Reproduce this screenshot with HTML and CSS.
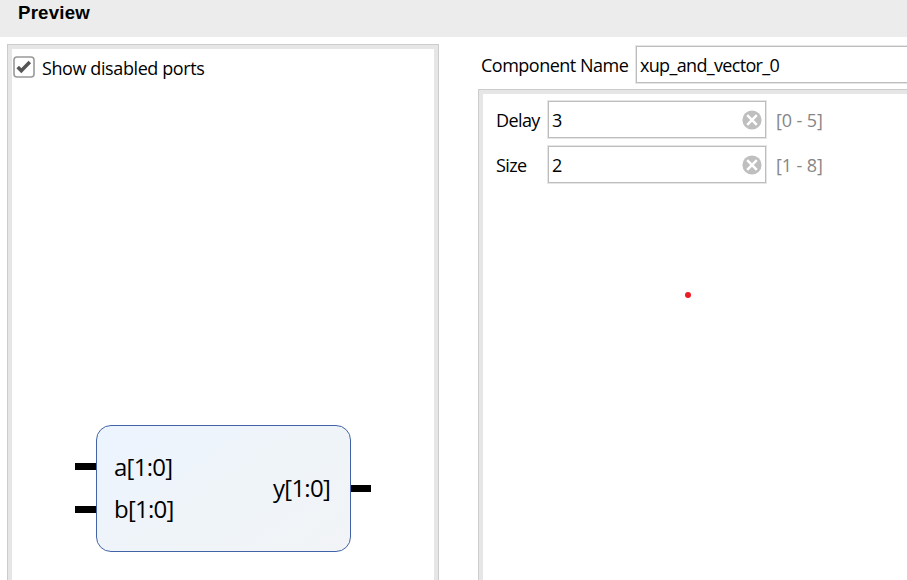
FILE: index.html
```
<!DOCTYPE html>
<html lang="en">
<head>
<meta charset="utf-8">
<title>Preview</title>
<link rel="stylesheet" href="styles.css">
</head>
<body>
<header class="header">Preview</header>
<main class="main">
  <section class="preview">
    <label class="toggle">
      <svg class="check" width="22" height="22" viewBox="0 0 22 22"><rect x="1" y="1" width="20" height="20" rx="3" fill="#fff" stroke="#999" stroke-width="1.6"/><path d="M4.7 11l3.6 3.8L16.8 6" fill="none" stroke="#555" stroke-width="3.5"/></svg>
      <span class="t-show">Show disabled ports</span>
    </label>
    <div class="symbol">
      <div class="pins pins-in"><i></i><i></i></div>
      <div class="block">
        <div class="inputs"><span class="t-a">a[1:0]</span><span class="t-b">b[1:0]</span></div>
        <span class="t-y">y[1:0]</span>
      </div>
      <div class="pins"><i></i></div>
    </div>
  </section>
  <section class="config">
    <div class="name-row"><span class="t-name">Component Name</span><div class="field name-field"><span class="t-value">xup_and_vector_0</span></div></div>
    <div class="params">
      <div class="row"><span class="label t-delay">Delay</span><div class="field"><span>3</span><svg width="20" height="20" viewBox="0 0 20 20"><circle cx="10" cy="10" r="9.6" fill="#bfbfbf"/><path d="M5.2 5.2l9.6 9.6m0-9.6l-9.6 9.6" stroke="#fff" stroke-width="2.5"/></svg></div><span class="range">[0 - 5]</span></div>
      <div class="row"><span class="label t-size">Size</span><div class="field"><span>2</span><svg width="20" height="20" viewBox="0 0 20 20"><circle cx="10" cy="10" r="9.6" fill="#bfbfbf"/><path d="M5.2 5.2l9.6 9.6m0-9.6l-9.6 9.6" stroke="#fff" stroke-width="2.5"/></svg></div><span class="range">[1 - 8]</span></div>
      <div class="dot"></div>
    </div>
  </section>
</main>
</body>
</html>
```
FILE: styles.css
```
* { box-sizing: border-box; }
body { margin: 0; height: 580px; overflow: hidden; background: #fff; color: #000; font: 18px/24px "Open Sans", "Noto Sans", sans-serif; white-space: nowrap; }
.header { height: 37px; padding: 1px 0 0 18px; background: #ececec; font: bold 18.67px/24px "Liberation Sans", sans-serif; letter-spacing: .2px; }
.main { display: flex; height: 543px; }
.preview { width: 432px; margin: 7px 0 0 7px; border: 1px solid #ccc; border-bottom: 0; box-shadow: inset 4px 0 #e6e6e6, inset -4px 0 #e6e6e6, inset 0 4px #e6e6e6; padding: 11px 0 0 5px; }
.toggle { display: flex; height: 24px; }
.check { margin-right: 7px; }
.t-show { letter-spacing: -.4px; }
.symbol { display: flex; margin: 345px 0 0 62px; }
.pins { width: 20px; padding-top: 60px; }
.pins-in { width: 21px; padding-top: 38px; }
.pins i { display: block; height: 7px; background: #000; }
.pins i + i { margin-top: 36px; }
.block { display: flex; justify-content: space-between; width: 255px; height: 127px; padding: 0 20px 0 17px; border: 1px solid #4263a5; border-radius: 15px; background: linear-gradient(145deg, #ecf4ff, #eff4f8 55%, #f2f4f7); font-size: 24px; line-height: 42px; }
.inputs { display: flex; flex-direction: column; padding-top: 20px; }
.t-y { padding-top: 41px; }
.t-a, .t-b, .t-y { letter-spacing: -.75px; }
.config { flex: 1; margin: 8px 0 0 39px; }
.name-row { display: flex; align-items: center; height: 39px; padding-left: 3px; }
.t-name { width: 154px; letter-spacing: -.5px; }
.field { display: flex; align-items: center; justify-content: space-between; width: 220px; height: 39px; padding: 0 4px 0 4px; border: 1px solid #e6e6e6; box-shadow: inset 0 0 0 1px #bdbdbd; }
.name-field { flex: 1; border-right: 0; box-shadow: inset 1px 1px #bdbdbd, inset 0 -1px #bdbdbd; }
.t-value { letter-spacing: -.67px; }
.params { height: 491px; margin-top: 5px; border: 1px solid #ccc; border-width: 1px 0 0 1px; box-shadow: inset 4px 4px #e6e6e6; padding: 10px 0 0 17px; }
.row { display: flex; align-items: center; height: 39px; margin-bottom: 6px; }
.label { width: 51px; letter-spacing: -.6px; }
.range { margin-left: 9px; color: #868686; letter-spacing: -.1px; }
.dot { width: 6px; height: 6px; margin: 108px 0 0 189px; border-radius: 50%; background: #ed1c24; }
```
